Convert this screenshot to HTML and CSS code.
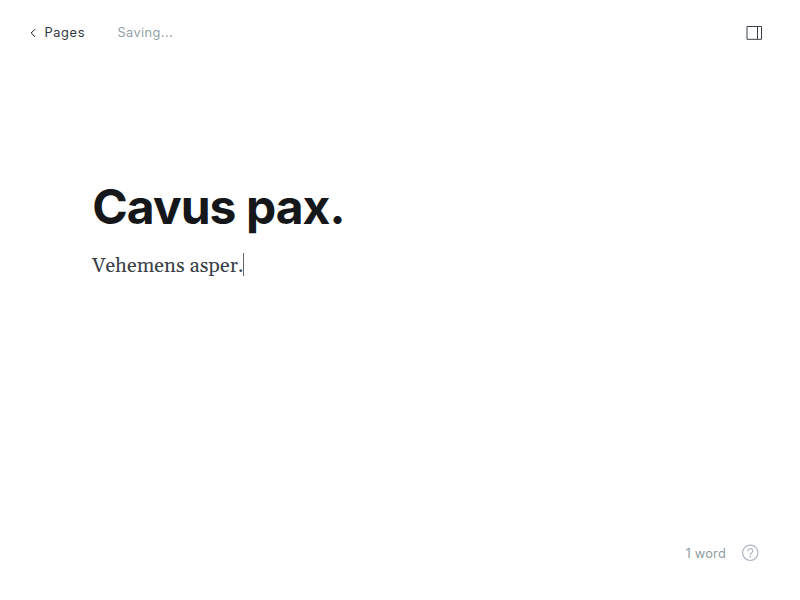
FILE: index.html
```html
<!DOCTYPE html>
<html lang="en">
<head>
<meta charset="utf-8">
<title>Editor</title>
<link rel="stylesheet" href="styles.css">
</head>
<body>
<header class="bar">
  <a class="back"><svg class="chevron" width="6" height="8" viewBox="0 0 6 8" fill="none" stroke="#15171a" stroke-linecap="round" stroke-linejoin="round"><path d="M4.7.5 1.2 4l3.5 3.5"/></svg><span class="back-label">Pages</span></a>
  <span class="status">Saving...</span>
  <svg class="panel" width="16" height="16" viewBox="0 0 16 16" fill="none" stroke="#394047" stroke-linejoin="round"><path d="M1 1.5h14.5v12.8H1zM11.5 1.5v12.8"/></svg>
</header>
<main class="editor">
  <h1 class="title">Cavus pax.</h1>
  <p class="text">Vehemens asper.<span class="caret"></span></p>
</main>
<footer class="footer">
  <span class="count">1 word</span>
  <svg class="help" width="18" height="18" viewBox="0 0 18 18" fill="none" stroke="#aab4c4" stroke-width="1.1" stroke-linecap="round" stroke-linejoin="round"><circle cx="9.3" cy="8.8" r="7.7"/><path d="M6.9 7a2.4 2.4 0 1 1 3.4 2.2c-.7.35-1 .8-1 1.5"/><circle cx="9.3" cy="12.8" r=".3"/></svg>
</footer>
</body>
</html>
```
FILE: styles.css
```css
* { box-sizing: border-box; }
body {
  margin: 0;
  height: 600px;
  display: flex;
  flex-direction: column;
  background: #fff;
  font-family: Inter, sans-serif;
  overflow: hidden;
}
.bar {
  display: flex;
  align-items: center;
  height: 65px;
  padding: 0 38px 0 30px;
  font-size: 12.8px;
  line-height: 19px;
}
.back { display: flex; align-items: center; color: #303840; letter-spacing: .62px; }
.back-label { margin-left: 8.5px; }
.status { margin-left: 32.4px; color: #959fa6; letter-spacing: .42px; }
.panel { margin-left: auto; }
.editor { flex: 1; padding: 114px 92px 0; }
.title {
  margin: 0;
  color: #15171a;
  font-size: 48px;
  font-weight: 700;
  line-height: 56px;
  letter-spacing: -.98px;
  text-indent: .3px;
}
.text {
  display: flex;
  align-items: center;
  margin: 15px 0 0;
  color: #394047;
  font-family: Gelasio, Georgia, "Liberation Serif", serif;
  font-size: 20px;
  line-height: 32px;
  letter-spacing: .08px;
}
.caret { width: 1px; height: 23px; margin-top: -3px; background: #606870; }
.footer {
  display: flex;
  align-items: center;
  justify-content: flex-end;
  height: 94px;
  padding: 0 41px 0 0;
  color: #8f9ba3;
  font-size: 12.8px;
}
.count { margin-right: 15px; letter-spacing: .22px; }
```
